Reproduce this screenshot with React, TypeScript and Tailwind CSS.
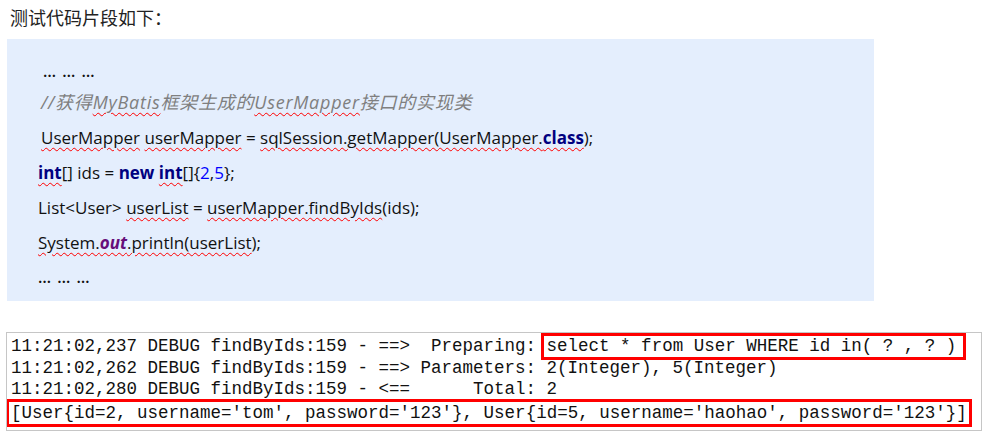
import React from "react";

const sp = "underline decoration-wavy decoration-[#ff0000] decoration-1 underline-offset-[3px]";
const kw = "font-bold text-[#000080]";

const Code = () => {
  return (
    <div className="ml-[7px] w-[867px] h-[262px] bg-[#e4eefd] pl-[31px] pt-[19px] text-[17px] text-[#111] font-['Open_Sans','Noto_Sans_CJK_SC',sans-serif]">
      <div className="h-[27px] ml-[5px] leading-[27px] text-[16px] font-semibold tracking-[1px]">… … …</div>
      <div className="h-[35px] ml-[3px] leading-[35px] italic text-[#7f7f7f] text-[18px] tracking-[0.75px]">
        //获得<span className={sp}>MyBatis</span>框架生成的<span className={sp}>UserMapper</span>接口的实现类
      </div>
      <div className="h-[35px] ml-[3px] leading-[35px]">
        <span className={sp}>UserMapper</span> <span className={sp}>userMapper</span> ={" "}
        <span className={sp}>
          sqlSession.getMapper(UserMapper.<span className={kw}>class</span>
        </span>
        );
      </div>
      <div className="h-[35px] leading-[35px]">
        <span className={`${kw} ${sp}`}>int</span>[] ids = <span className={kw}>new</span>{" "}
        <span className={`${kw} ${sp}`}>int</span>[]{"{"}
        <span className="text-[#0000ff]">2</span>,<span className="text-[#0000ff]">5</span>
        {"};"}
      </div>
      <div className="h-[35px] leading-[35px]">
        List&lt;User&gt; <span className={sp}>userList</span> ={" "}
        <span className={sp}>userMapper.findByIds</span>(ids);
      </div>
      <div className="h-[35px] leading-[35px]">
        <span className={sp}>
          System.<span className="font-bold italic text-[#660e7a]">out</span>.println(userList
        </span>
        );
      </div>
      <div className="h-[35px] leading-[35px] text-[16px] font-semibold tracking-[1px]">… … …</div>
    </div>
  );
};

const box = "inline-block outline-solid outline-[3px] outline-[#ff0000] outline-offset-[0px]";

const Log = () => {
  return (
    <div className="ml-[6px] w-[976px] h-[99px] border border-[#c6c6c6] bg-white overflow-hidden pl-[4px] pt-[3px] text-[17.5px] leading-[21.6px] text-[#111] font-['Liberation_Mono',monospace] whitespace-pre">
      <div>
        11:21:02,237 DEBUG findByIds:159 - ==&gt;  Preparing:{" "}
        <span className={`${box} leading-[21px] pl-[3px] pr-[7px] -ml-[3px]`}>select * from User WHERE id in( ? , ? )</span>
      </div>
      <div>11:21:02,262 DEBUG findByIds:159 - ==&gt; Parameters: 2(Integer), 5(Integer)</div>
      <div>11:21:02,280 DEBUG findByIds:159 - &lt;==      Total: 2</div>
      <div className="mt-[1px]">
        <span className={`${box} leading-[22px] pl-[2px] pr-[2px] -ml-[2px]`}>
          [User{"{"}id=2, username='tom', password='123'{"}"}, User{"{"}id=5, username='haohao', password='123'{"}"}]
        </span>
      </div>
    </div>
  );
};

export default function App() {
  return (
    <div className="w-[990px] h-[447px] bg-white">
      <div className="h-[39px] pl-[10px] pt-[2px] text-[18px] leading-[30px] text-[#222] font-['Noto_Sans_CJK_SC',sans-serif]">
        测试代码片段如下：
      </div>
      <Code />
      <div className="h-[31px]" />
      <Log />
    </div>
  );
}
